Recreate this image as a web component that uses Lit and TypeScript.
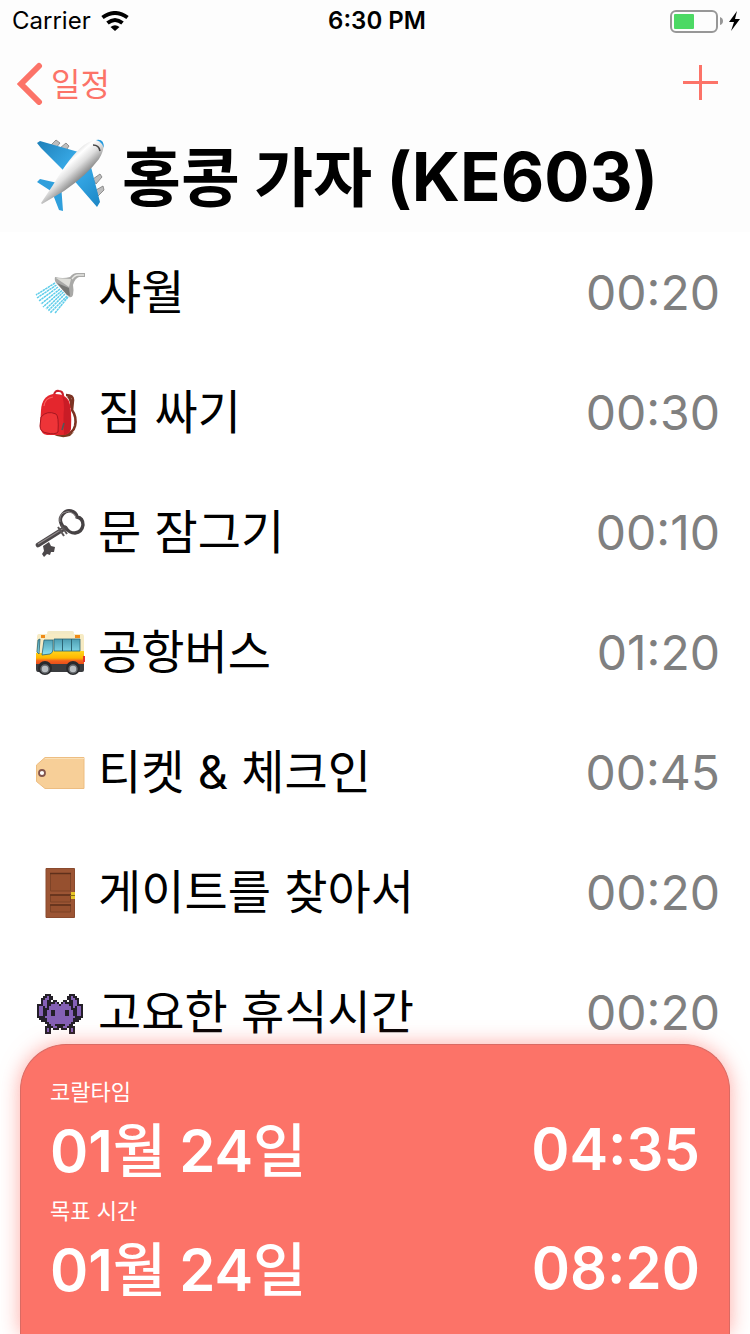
import { LitElement, html, css, svg } from "lit";
import { customElement } from "lit/decorators.js";

const plane = svg`
  <defs>
    <linearGradient id="hull" gradientUnits="userSpaceOnUse" x1="28" y1="18" x2="46" y2="38"><stop offset="0" stop-color="#cfcfcf"/><stop offset=".3" stop-color="#fff"/><stop offset=".6" stop-color="#dedede"/><stop offset="1" stop-color="#8a8a8a"/></linearGradient>
    <linearGradient id="wing" x1="0" y1="0" x2="1" y2="1"><stop offset="0" stop-color="#1d7fb8"/><stop offset=".5" stop-color="#3cb0ee"/><stop offset="1" stop-color="#1b85c4"/></linearGradient>
  </defs>
  <g fill="#bdbdbd" stroke="#7c7c7c" stroke-width=".8">
    <path d="M14 7l6-6 4 3-5 6zM24 9l6-5 3 3-4 6zM57 40l7-5 2 3-6 7zM60 51l7-4 1 4-6 6z"/>
  </g>
  <path fill="url(#wing)" d="M1 4L4 2l42 12-17 19L5 9zM35 38l19-14 10 39-3 5z"/>
  <path fill="#2f9fdc" d="M1 43l3-3 22 5-8 9zM16 53l9-8 2 27-4-1z"/>
  <path fill="url(#hull)" d="M5 64l12-18Q34 17 48 6q12-8 18-4 4 7-3 18Q51 36 28 52L6 65z"/>
  <path fill="#239be0" d="M60 1q8-2 8 8l-2-4q-2-3-6-4"/>
  <path fill="none" stroke="#444" stroke-width="1.600" d="M57 6q6 0 7 6"/>`;

const shower = svg`
  <g fill="none" stroke="#5fcdea" stroke-width="1.500" stroke-dasharray="2.500 .5">
    <path d="M20 15L1 27M21.500 17L2 30M23 19L4 33M25 21L6 36M27 22.500L8 39M28.500 24L11 41M30 26L13 43M32 28L15 45M33 29L20 45"/>
  </g>
  <path fill="#a9a9a7" d="M20 9q-1 4 2 7l12 13q3 1 4-2 1-5 0-10 2-7 6-8h6V5h-8q-4 0-7 4-7 2-15 0"/>
  <path fill="#deded9" d="M21 10l15 1-2 8z"/>
  <path fill="#777875" d="M22 15l12 5 1 8-3-1z"/>
  <path fill="none" stroke="#e8e8e5" stroke-width="1.500" d="M37 11q3-4 6-4h6"/>`;

const backpack = svg`
  <path fill="none" stroke="#7d3323" stroke-width="2.600" d="M31 7q7 0 7 5l-1 10q5 7 3 16-2 8-11 8M33 8q4 4 3 12"/>
  <path fill="#7b3a20" d="M17 46h17l5-2-4 4q-9 3-18-2"/>
  <path fill="none" stroke="#c9202b" stroke-width="2.200" d="M19 7q1-5 5-4 4 0 4 5"/>
  <path fill="#e4262d" d="M6 22Q7 8 18 6q12-1 16 7 3 8 2 28-1 6-9 6H12q-6-1-7-8z"/>
  <path fill="#c91c26" d="M27 8q6 2 8 11l1 19q0 7-7 9-1-20 0-26 0-8-2-13"/>
  <path fill="#ee3438" stroke="#a51720" d="M6 29q6-7 15-3 3 2 2 18-3 3-11 1-7-1-7-7z"/>
  <path fill="none" stroke="#f76260" stroke-width="1.200" d="M9 18q1-8 9-9"/>
  <path fill="none" stroke="#565656" stroke-width="1.600" d="M29 35l-2 7"/>`;

const key = svg`
  <path fill="none" stroke="#464244" stroke-width="3.400" d="M31 20q-4-1-5-5-2-5 2-9 3-4 8-3 5 1 6 6 6 1 6 8-1 7-8 8-6 0-9-5z"/>
  <path fill="none" stroke="#918c8d" stroke-width="1" d="M25 14q-1-6 3-9 5-3 9 0 4 2 4 5"/>
  <path stroke="#4c484a" stroke-width="4.600" stroke-linecap="round" d="M30 20L3 37"/>
  <path stroke="#8f898a" stroke-width="1.100" d="M29 20L3 36"/>
  <path stroke="#5b5657" stroke-width="2" d="M26 17l6 9M23 19l6 9"/>
  <path fill="#4c484a" d="M8 38l6-4 2 4 4 1-1 5-3 0-1 3-3-1-3 3-2-3 2-3z"/>`;

const bus = svg`
  <defs><linearGradient id="paint" x1="0" y1="0" x2="0" y2="1"><stop offset="0" stop-color="#ffd51d"/><stop offset=".5" stop-color="#ffb700"/><stop offset=".7" stop-color="#f3601f"/><stop offset="1" stop-color="#e64b17"/></linearGradient>
  <linearGradient id="glass" x1="0" y1="0" x2="0" y2="1"><stop offset="0" stop-color="#4c9db2"/><stop offset="1" stop-color="#8ee3f2"/></linearGradient></defs>
  <rect x="12" y="3" width="27" height="4" rx="2" fill="#f3e9c4"/>
  <path fill="#f7ebc3" d="M4 6h43q2 0 2 3v18H1l1-18q0-3 2-3"/>
  <path fill="url(#paint)" d="M1 25h15l2-2h31v14H1z"/>
  <path fill="#3a3c3f" d="M1 36h48v6q0 2-2 2H3q-2 0-2-3z"/>
  <path fill="url(#glass)" stroke="#2c6474" stroke-width=".8" d="M3 12l2-1-1 15-2-2zM9 12h9v9q0 4-3 5l-8 1zM19 11h26v12H19z"/>
  <path stroke="#2c6474" d="M27.500 11v12M36.500 11v12"/>
  <path fill="#ef8a18" d="M6 7h4v3H6zM40 7h5v3h-5z"/>
  <path fill="#e3342d" d="M48 28h2v6h-2z"/>
  <g fill="#292a2d"><circle cx="10" cy="40" r="7"/><circle cx="38" cy="40" r="7"/></g>
  <g fill="#b9bec2" stroke="#64686c" stroke-width="1.500"><circle cx="10" cy="41" r="4"/><circle cx="38" cy="41" r="4"/></g>`;

const tag = svg`
  <path fill="#f7cf98" stroke="#edbd81" d="M1.500 17L10 9.500h39v31H10L1.500 33.500z"/>
  <path stroke="#fae1b9" d="M10 10.500h39"/>
  <circle cx="7" cy="25" r="3" fill="#fff" stroke="#83564d" stroke-width="1.800"/>`;

const door = svg`
  <path fill="#9c5534" stroke="#8a4a2e" d="M11 .5h28.500v49H11z"/>
  <g fill="#96502f" stroke="#7d4327" stroke-width="1"><path d="M15.500 5.500h20V23h-20zM15.500 27h20v7h-20zM15.500 37h20v7h-20z"/></g>
  <path stroke="#5f301b" stroke-width="1.500" d="M15 5.500h21M15 27h21M15 37h21"/>
  <path fill="#e6c428" d="M36 24h4v3h-4zM36 28h4v3h-4z"/><path stroke="#8a6b10" d="M35 27.500h5"/>`;

// Left half of the sprite, centre column last; the right half mirrors it.
const sprite = [
  "....###.....",
  "...##o##....",
  "..##oo##....",
  "..#oo##.##..",
  "..#oo####o#.",
  "###oo##oooo#",
  "#oo#o#oooooo",
  "#oo###oooooo",
  "#oo##oo##ooo",
  "#oo##oo##ooo",
  "#oo##oo##ooo",
  "####oooooooo",
  ".####ooooooo",
  "..###ooooooo",
  "....##oooooo",
  ".....##oo###",
  "....####oo##",
  "....#o#.###.",
  "....#o#.....",
  "....###.....",
];
const pixels = (mark: string) =>
  sprite
    .flatMap((half, y) =>
      [...half, ...[...half].reverse().slice(1)].map((c, x) =>
        c === mark ? `M${2 + 2 * x} ${6 + 2 * y}h2v2h-2z` : ""))
    .join("");
const alien = svg`
  <g shape-rendering="crispEdges">
    <path fill="#231f27" d=${pixels("#")} />
    <path fill="#8460b4" d=${pixels("o")} />
  </g>`;

const tasks = [
  { icon: shower, name: "샤월", time: "00:20" },
  { icon: backpack, name: "짐 싸기", time: "00:30" },
  { icon: key, name: "문 잠그기", time: "00:10" },
  { icon: bus, name: "공항버스", time: "01:20" },
  { icon: tag, name: "티켓 & 체크인", time: "00:45" },
  { icon: door, name: "게이트를 찾아서", time: "00:20" },
  { icon: alien, name: "고요한 휴식시간", time: "00:20" },
];

const summary = [
  { label: "코랄타임", month: "01", day: "24", time: "04:35" },
  { label: "목표 시간", month: "01", day: "24", time: "08:20" },
];

@customElement("app-root")
export class AppRoot extends LitElement {
  static styles = css`
    :host {
      display: flex;
      flex-direction: column;
      height: 100vh;
      overflow: hidden;
      background: #fff;
      color: #000;
      font-family: Inter, "Noto Sans CJK KR", sans-serif;
      --coral: #fc7368;
    }
    * { box-sizing: border-box; }
    svg { display: block; flex: none; }
    .top { background: #fdfdfd; flex: none; }
    .status {
      display: grid;
      grid-template-columns: 1fr auto 1fr;
      align-items: center;
      height: 40px;
      padding: 1px 8px 0 12px;
      font-size: 24px;
      line-height: 28px;
    }
    .carrier { display: flex; align-items: center; gap: 10px; }
    .clock { font-weight: 600; }
    .power { display: flex; justify-content: flex-end; }
    .nav {
      display: flex;
      align-items: center;
      justify-content: space-between;
      height: 86px;
      padding: 0 32px 0 17px;
    }
    .back {
      display: flex;
      align-items: center;
      gap: 8px;
      color: var(--coral);
      text-decoration: none;
      font: 32px/40px "Noto Sans CJK KR", sans-serif;
    }
    .back span { padding-bottom: 2px; }
    .add { padding: 0; border: 0; background: none; color: var(--coral); }
    .title {
      display: flex;
      align-items: center;
      gap: 16px;
      height: 106px;
      margin: 0;
      padding: 0 36px 8px;
      font-size: 67px;
      line-height: 96px;
      font-weight: 700;
      white-space: nowrap;
    }
    .korean { font-family: "Noto Sans CJK KR", sans-serif; font-size: 64px; }
    .tasks {
      flex: 1;
      min-height: 0;
      margin: 0;
      padding: 0;
      list-style: none;
      overflow-y: auto;
      scrollbar-width: none;
    }
    .task {
      display: flex;
      align-items: center;
      gap: 13px;
      height: 120px;
      padding: 1px 30px 0 35px;
      font-size: 47px;
      line-height: 64px;
    }
    .name { flex: 1; padding-bottom: 2px; }
    .time { color: #808080; font-size: 48px; }
    .card {
      flex: none;
      position: relative;
      margin: 0 20px;
      padding: 31px 29px 20px;
      border: 1px solid #d96a63;
      border-bottom: 0;
      border-radius: 46px 46px 0 0;
      background: var(--coral);
      box-shadow: 0 0 20px rgba(253, 114, 104, 0.6);
      color: #fff;
    }
    .label { font-size: 22px; line-height: 33px; }
    .moment {
      display: flex;
      justify-content: space-between;
      align-items: center;
      height: 86px;
      padding-bottom: 6px;
      font-size: 58px;
      line-height: 80px;
      font-weight: 600;
    }
    .unit { font-family: "Noto Sans CJK KR", sans-serif; font-weight: 500; }
  `;

  render() {
    return html`
      <header class="top">
        <div class="status">
          <div class="carrier">
            <span>Carrier</span>
            <svg width="28" height="20" viewBox="0 0 28 20">
              <g fill="none" stroke="#000" stroke-width="4"><path d="M1.500 6.500q12.500-9 25 0M6.500 12q7.500-6 15 0"/></g>
              <path d="M9.500 16q4.500-3.600 9 0L14 20z"/>
            </svg>
          </div>
          <span class="clock">6:30 PM</span>
          <div class="power">
            <svg width="72" height="24" viewBox="0 0 72 24">
              <rect x="1" y="2" width="46" height="21" rx="5" fill="none" stroke="#979797" stroke-width="2"/>
              <rect x="4" y="5" width="20" height="15" rx="1" fill="#4cd964"/>
              <path fill="#979797" d="M50 8q3 1 3 4t-3 4z"/>
              <path d="M67 2l-8 11h5l-3 9 9-12h-5z"/>
            </svg>
          </div>
        </div>
        <nav class="nav">
          <a class="back" href="#">
            <svg width="26" height="44" viewBox="0 0 26 44"><path fill="none" stroke="currentColor" stroke-width="6" stroke-linecap="round" d="M22 5L4 23 22 41"/></svg>
            <span>일정</span>
          </a>
          <button class="add" aria-label="추가">
            <svg width="35" height="36" viewBox="0 0 35 36"><path stroke="currentColor" stroke-width="3" d="M17.500 0v35M0 17.500h35"/></svg>
          </button>
        </nav>
        <h1 class="title">
          <svg width="70" height="72" viewBox="0 0 70 72">${plane}</svg>
          <span><span class="korean">홍콩 가자 </span>(KE603)</span>
        </h1>
      </header>
      <ul class="tasks">
        ${tasks.map((t) => html`
          <li class="task">
            <svg width="50" height="50" viewBox="0 0 50 50">${t.icon}</svg>
            <span class="name">${t.name}</span>
            <time class="time">${t.time}</time>
          </li>`)}
      </ul>
      <section class="card">
        ${summary.map((s) => html`
          <div class="label">${s.label}</div>
          <div class="moment">
            <span>${s.month}<span class="unit">월 </span>${s.day}<span class="unit">일</span></span>
            <time>${s.time}</time>
          </div>`)}
      </section>
    `;
  }
}
